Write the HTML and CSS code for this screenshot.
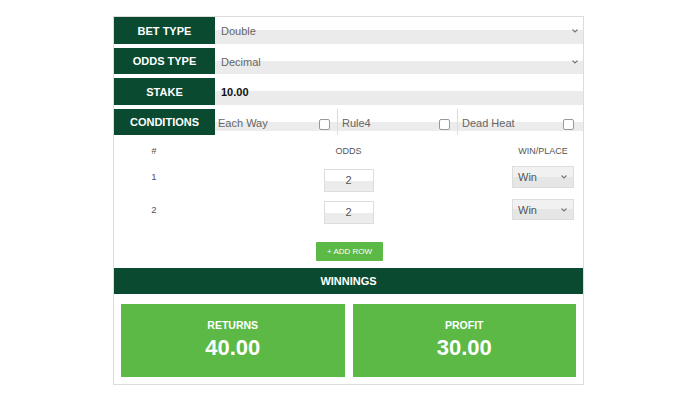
FILE: index.html
```html
<!DOCTYPE html>
<html>
<head>
<meta charset="utf-8">
<link rel="stylesheet" href="styles.css">
</head>
<body>
<div class="calc">
  <div class="row">
    <div class="label">BET TYPE</div>
    <div class="field select-field"><span>Double</span><svg class="chev" width="6" height="4" viewBox="0 0 6 4"><path d="M0.5 0.5 L3 3 L5.5 0.5" fill="none" stroke="#777" stroke-width="1.1"/></svg></div>
  </div>
  <div class="row">
    <div class="label">ODDS TYPE</div>
    <div class="field select-field"><span>Decimal</span><svg class="chev" width="6" height="4" viewBox="0 0 6 4"><path d="M0.5 0.5 L3 3 L5.5 0.5" fill="none" stroke="#777" stroke-width="1.1"/></svg></div>
  </div>
  <div class="row">
    <div class="label">STAKE</div>
    <div class="field stake"><span>10.00</span></div>
  </div>
  <div class="row">
    <div class="label">CONDITIONS</div>
    <div class="conds">
      <div class="cond c1"><span>Each Way</span><div class="check"></div></div>
      <div class="cond c2"><span>Rule4</span><div class="check"></div></div>
      <div class="cond c3"><span>Dead Heat</span><div class="check"></div></div>
    </div>
  </div>

  <div class="table">
    <div class="thead">
      <div class="col">#</div>
      <div class="col">ODDS</div>
      <div class="col">WIN/PLACE</div>
    </div>
    <div class="trow">
      <div class="col num">1</div>
      <div class="col"><div class="odds">2</div></div>
      <div class="col"><div class="wp"><span>Win</span><svg class="chev" width="6" height="4" viewBox="0 0 6 4"><path d="M0.5 0.5 L3 3 L5.5 0.5" fill="none" stroke="#777" stroke-width="1.1"/></svg></div></div>
    </div>
    <div class="trow second">
      <div class="col num">2</div>
      <div class="col"><div class="odds">2</div></div>
      <div class="col"><div class="wp"><span>Win</span><svg class="chev" width="6" height="4" viewBox="0 0 6 4"><path d="M0.5 0.5 L3 3 L5.5 0.5" fill="none" stroke="#777" stroke-width="1.1"/></svg></div></div>
    </div>
    <div class="btn-wrap"><div class="add">+ ADD ROW</div></div>
  </div>

  <div class="winnings">WINNINGS</div>
  <div class="results">
    <div class="box">
      <div class="box-label">RETURNS</div>
      <div class="box-value">40.00</div>
    </div>
    <div class="box">
      <div class="box-label">PROFIT</div>
      <div class="box-value">30.00</div>
    </div>
  </div>
</div>
</body>
</html>
```

FILE: styles.css
```css
* { box-sizing: border-box; }
html, body { margin: 0; padding: 0; background: #fff; }
body {
  font-family: "Liberation Sans", Arial, sans-serif;
  color: #555;
}
.calc {
  margin: 16px 0 0 113px;
  width: 471px;
  border: 1px solid #dcdcdc;
  padding-bottom: 7px;
}
.row {
  display: flex;
  height: 26.5px;
  margin-bottom: 4px;
}
.label {
  width: 101px;
  flex: none;
  background: #0a4a31;
  color: #fff;
  font-weight: bold;
  font-size: 11px;
  display: flex;
  align-items: center;
  justify-content: center;
  padding-top: 1px;
}
.field {
  flex: 1;
  display: flex;
  align-items: center;
  justify-content: space-between;
  padding: 2px 5px 0 6px;
  font-size: 11px;
  color: #666;
  background: linear-gradient(to bottom, #fff 13px, #ebebeb 13px);
}
.stake { color: #111; font-weight: bold; }
.chev { display: block; margin-top: 0; }
.conds {
  flex: 1;
  display: flex;
}
.cond {
  display: flex;
  align-items: center;
  justify-content: space-between;
  padding: 2px 7px 0 3px;
  font-size: 11px;
  color: #666;
  background: linear-gradient(to bottom, transparent 12.5px, #ececec 12.5px, #ececec 21.5px, transparent 21.5px);
}
.c1 { width: 122px; }
.c2 { width: 120px; border-left: 1px solid #ddd; padding-left: 4px; }
.c3 { flex: 1; border-left: 1px solid #ddd; padding-left: 4px; padding-right: 9px; }
.check {
  width: 11px;
  height: 11px;
  background: #fff;
  border: 1px solid #999;
  border-radius: 2px;
  margin-top: 3px;
}
.table { padding-top: 6px; }
.thead, .trow {
  display: grid;
  grid-template-columns: 80px 309px 80px;
}
.thead {
  font-size: 9px;
  line-height: 12px;
  color: #555;
}
.col { text-align: center; }
.trow { margin-top: 9px; height: 25.5px; }
.trow.second { margin-top: 7px; }
.num { font-size: 9.5px; line-height: 12px; padding-top: 5px; }
.odds {
  width: 50px;
  height: 23px;
  margin: 2.5px auto 0;
  border: 1px solid #ddd;
  background: linear-gradient(to bottom, #fff 50%, #ececec 50%);
  font-size: 11px;
  color: #555;
  line-height: 20px;
}
.wp {
  width: 62px;
  height: 21.5px;
  margin: 0 auto;
  border: 1px solid #ddd;
  background: linear-gradient(to bottom, #f1f1f1 50%, #e6e6e6 50%);
  display: flex;
  align-items: center;
  justify-content: space-between;
  padding: 1px 6px 0 5px;
  font-size: 11px;
  color: #555;
}
.btn-wrap {
  display: flex;
  justify-content: center;
  padding-left: 2px;
  margin-top: 17.5px;
}
.add {
  width: 67px;
  height: 19px;
  background: #5cb946;
  color: #fff;
  font-size: 8px;
  display: flex;
  align-items: center;
  justify-content: center;
  border-radius: 1px;
}
.winnings {
  margin-top: 7px;
  height: 26px;
  background: #0a4a31;
  color: #fff;
  font-weight: bold;
  font-size: 11px;
  display: flex;
  align-items: center;
  justify-content: center;
}
.results {
  display: flex;
  gap: 8px;
  padding: 0 7px;
  margin-top: 10.5px;
}
.box {
  flex: 1;
  height: 72.5px;
  background: #5cb946;
  color: #fff;
  text-align: center;
  padding-top: 15px;
}
.box-label {
  font-size: 10.5px;
  font-weight: bold;
  line-height: 12px;
}
.box-value {
  font-size: 22px;
  font-weight: bold;
  line-height: 24px;
  margin-top: 5px;
}
```
